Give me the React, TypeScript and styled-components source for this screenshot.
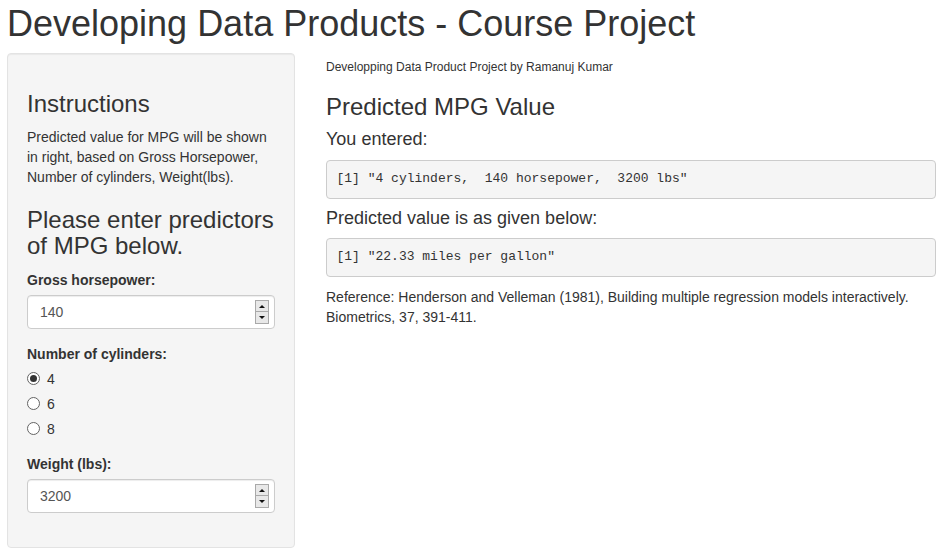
import styled, { createGlobalStyle } from "styled-components";

const GlobalStyle = createGlobalStyle`
  * { box-sizing: border-box; }
  html, body {
    margin: 0;
    padding: 0;
    background: #fff;
  }
  body {
    font-family: "Liberation Sans", Arial, Helvetica, sans-serif;
    font-size: 14px;
    line-height: 1.42857143;
    color: #333;
  }
`;

type NumberInputProps = { value: number };

function NumberInput({ value }: NumberInputProps) {
    return (
        <NumberBox>
            <span>{value}</span>
            <Spinner>
                <SpinButton><ArrowUp /></SpinButton>
                <SpinButton><ArrowDown /></SpinButton>
            </Spinner>
        </NumberBox>
    );
}

const cylinders = [4, 6, 8];

export default function App() {
    const selected = 4;

    return (
        <Page>
            <GlobalStyle />
            <Titulo>Developing Data Products - Course Project</Titulo>
            <Row>
                {/* sidebar */}
                <Sidebar>
                    <Heading $first>Instructions</Heading>
                    <Paragraph>
                        Predicted value for MPG will be shown in right, based on Gross Horsepower,
                        Number of cylinders, Weight(lbs).
                    </Paragraph>
                    <Heading>Please enter predictors of MPG below.</Heading>
                    <FormGroup>
                        <Label>Gross horsepower:</Label>
                        <NumberInput value={140} />
                    </FormGroup>
                    <FormGroup>
                        <Label>Number of cylinders:</Label>
                        {cylinders.map((c) => (
                            <RadioRow key={c}>
                                <RadioCircle $checked={c === selected} />
                                {c}
                            </RadioRow>
                        ))}
                    </FormGroup>
                    <FormGroup>
                        <Label>Weight (lbs):</Label>
                        <NumberInput value={3200} />
                    </FormGroup>
                </Sidebar>
                {/* main */}
                <Main>
                    <Byline>Developping Data Product Project by Ramanuj Kumar</Byline>
                    <Heading>Predicted MPG Value</Heading>
                    <SubHeading>You entered:</SubHeading>
                    <Output>{'[1] "4 cylinders,  140 horsepower,  3200 lbs"'}</Output>
                    <SubHeading>Predicted value is as given below:</SubHeading>
                    <Output>{'[1] "22.33 miles per gallon"'}</Output>
                    <Paragraph>
                        Reference: Henderson and Velleman (1981), Building multiple regression models
                        interactively. Biometrics, 37, 391-411.
                    </Paragraph>
                </Main>
            </Row>
        </Page>
    );
}

const Page = styled.div`
    padding: 0 6px 0 7px;
`;

const Titulo = styled.h1`
    font-size: 36px;
    font-weight: 500;
    line-height: 1.1;
    margin: 4px 0 9px;
    white-space: nowrap;
`;

const Row = styled.div`
    display: flex;
    align-items: flex-start;
`;

const Sidebar = styled.div`
    width: 288px;
    flex-shrink: 0;
    padding: 19px;
    background: #f5f5f5;
    border: 1px solid #e3e3e3;
    border-radius: 4px;
    box-shadow: inset 0 1px 1px rgba(0, 0, 0, 0.05);
`;

const Main = styled.div`
    width: 610px;
    margin-left: 31px;
`;

const Heading = styled.h3<{ $first?: boolean }>`
    font-size: 24px;
    font-weight: 500;
    line-height: 1.1;
    margin: ${(p) => (p.$first ? "18px" : "20px")} 0 10px;
`;

const SubHeading = styled.h4`
    font-size: 18px;
    font-weight: 500;
    line-height: 1.1;
    margin: 10px 0;
`;

const Byline = styled.h6`
    font-size: 12px;
    font-weight: 500;
    line-height: 1.1;
    margin: 8px 0 10px;
`;

const Paragraph = styled.p`
    margin: 0 0 10px;
`;

const FormGroup = styled.div`
    margin-bottom: 15px;
`;

const Label = styled.label`
    display: block;
    font-weight: bold;
    margin-bottom: 5px;
`;

const NumberBox = styled.div`
    display: flex;
    align-items: center;
    justify-content: space-between;
    height: 34px;
    padding: 0 5px 0 12px;
    background: #fff;
    color: #555;
    border: 1px solid #ccc;
    border-radius: 4px;
    box-shadow: inset 0 1px 1px rgba(0, 0, 0, 0.075);
`;

const Spinner = styled.div`
    display: flex;
    flex-direction: column;
    width: 14px;
    height: 24px;
    border: 1px solid #a9a9a9;
    background: #e8e8e8;
`;

const SpinButton = styled.div`
    flex: 1;
    display: flex;
    align-items: center;
    justify-content: center;
    & + & {
        border-top: 1px solid #a9a9a9;
    }
`;

const ArrowUp = styled.span`
    width: 0;
    height: 0;
    border-left: 3px solid transparent;
    border-right: 3px solid transparent;
    border-bottom: 3px solid #111;
`;

const ArrowDown = styled.span`
    width: 0;
    height: 0;
    border-left: 3px solid transparent;
    border-right: 3px solid transparent;
    border-top: 3px solid #111;
`;

const RadioRow = styled.div`
    display: flex;
    align-items: center;
    height: 20px;
    & + & {
        margin-top: 5px;
    }
`;

const RadioCircle = styled.span<{ $checked: boolean }>`
    position: relative;
    width: 13px;
    height: 13px;
    margin-right: 7px;
    border: 1px solid #646464;
    border-radius: 50%;
    background: #fff;
    &::after {
        content: "";
        display: ${(p) => (p.$checked ? "block" : "none")};
        position: absolute;
        left: 2px;
        top: 2px;
        width: 7px;
        height: 7px;
        border-radius: 50%;
        background: #333;
    }
`;

const Output = styled.pre`
    margin: 0 0 10px;
    padding: 9px 9.5px;
    font-family: "Liberation Mono", "Courier New", monospace;
    font-size: 13px;
    line-height: 1.42857143;
    color: #333;
    background: #f5f5f5;
    border: 1px solid #ccc;
    border-radius: 4px;
    white-space: pre;
`;
